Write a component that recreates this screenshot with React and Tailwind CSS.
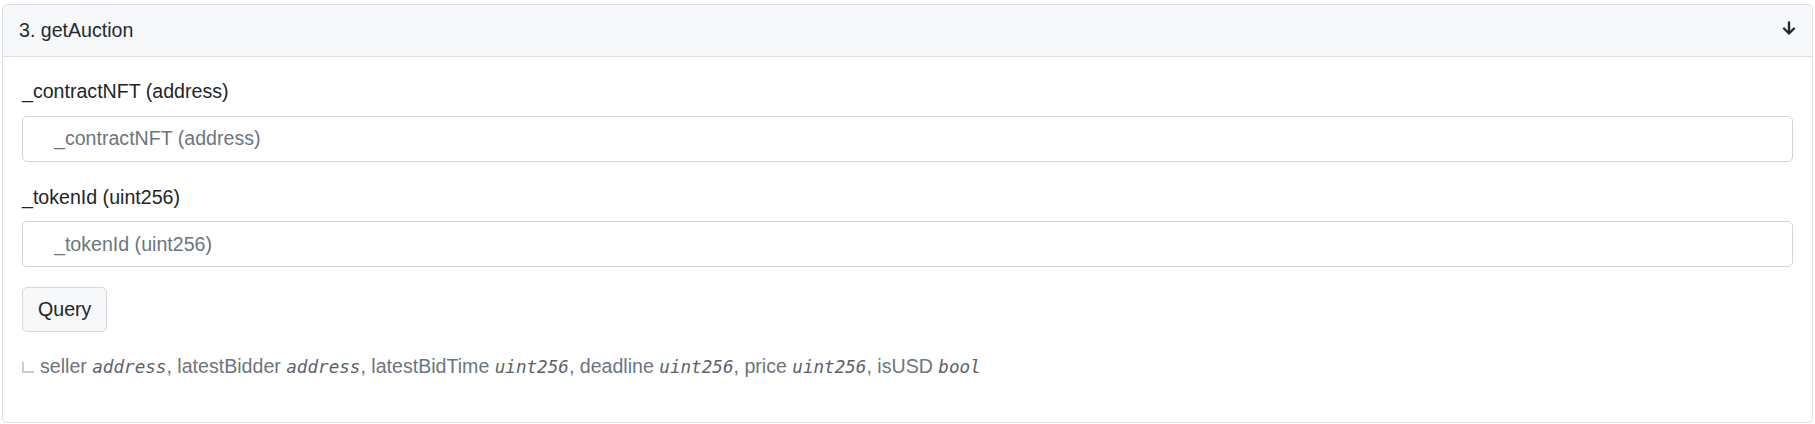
import React from 'react';

const sans = { fontFamily: '"Liberation Sans", Arial, sans-serif' };
const mono = { fontFamily: '"DejaVu Sans Mono", monospace' };

const outputs = [
  ['seller', 'address'],
  ['latestBidder', 'address'],
  ['latestBidTime', 'uint256'],
  ['deadline', 'uint256'],
  ['price', 'uint256'],
  ['isUSD', 'bool'],
];

const Field = ({ name, type, className = '' }) => (
  <div className={className}>
    <label className="block text-[19.6px] leading-[28.8px] text-[#212529] mb-[10px]">
      {name} ({type})
    </label>
    <input
      type="text"
      placeholder={`${name} (${type})`}
      className="block w-full h-[46px] rounded-[5px] border border-[#ced4da] bg-white pl-[31px] pr-3 text-[19.6px] text-[#212529] placeholder:text-[#6c757d] outline-none"
    />
  </div>
);

const App = () => {
  return (
    <div className="w-[1815px] h-[424px] bg-white pt-[4px] px-[2px]" style={sans}>
      <div className="rounded-[5px] border border-[#dcdfe3] overflow-hidden">
        <div className="flex items-center justify-between bg-[#f6f8fa] border-b border-[#dcdfe3] pl-[16px] pr-[16px] py-[11px]">
          <span className="text-[19.6px] leading-[28.8px] text-[#24292f]">3. getAuction</span>
          <svg width="14" height="14" viewBox="0 0 14 14" className="mb-[4px]" fill="none" stroke="#24292f" strokeWidth="2.4" strokeLinecap="round" strokeLinejoin="round">
            <path d="M7 1.5v10.5" />
            <path d="M2 7.5l5 5 5-5" />
          </svg>
        </div>
        <div className="px-[19px] pt-[20px] pb-[40px]">
          <Field name="_contractNFT" type="address" className="mb-[21px]" />
          <Field name="_tokenId" type="uint256" className="mb-[20px]" />
          <button className="h-[45px] px-[15px] rounded-[5px] border border-[#d5d9de] bg-[#f6f8fa] text-[19.6px] text-[#212529]">
            Query
          </button>
          <div className="mt-[20px] flex items-center text-[19.6px] leading-[28.8px] text-[#6c757d]">
            <span className="inline-block w-[12px] h-[11px] border-l-2 border-b-2 border-[#c8ccd4] mr-[6px] mt-[1px]" />
            <span>
              {outputs.map(([n, t], i) => (
                <React.Fragment key={n}>
                  {n}{' '}
                  <em className="text-[17.6px] text-[#5a6169]" style={mono}>{t}</em>
                  {i < outputs.length - 1 ? ', ' : ''}
                </React.Fragment>
              ))}
            </span>
          </div>
        </div>
      </div>
    </div>
  );
};

export default App;
